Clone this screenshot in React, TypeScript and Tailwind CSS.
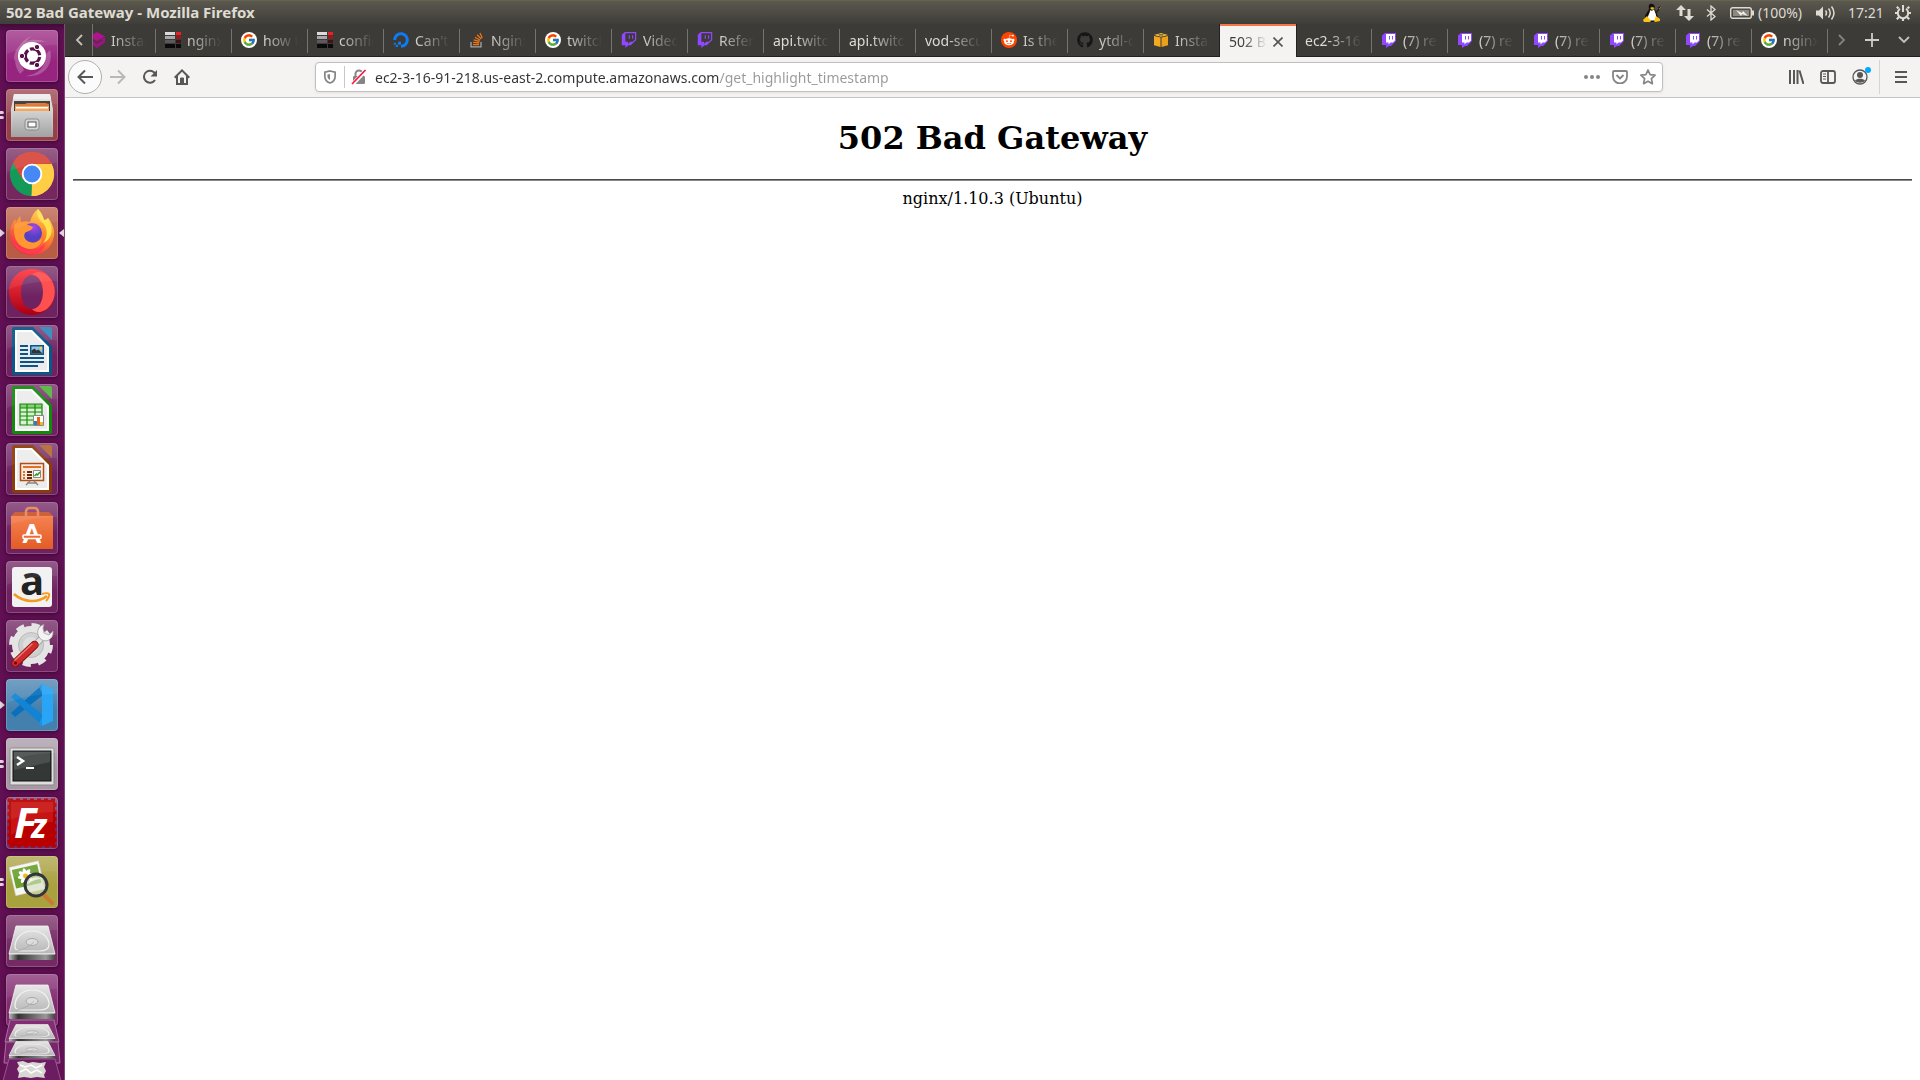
import React from "react";
import { FcGoogle } from "react-icons/fc";
import { FaDigitalOcean, FaGithub, FaRedditAlien, FaTwitch } from "react-icons/fa";

/* ---------- tab icons ---------- */

const ClearLogo = () => (
  <svg viewBox="0 0 16 16" className="size-4">
    <path d="M8 0l8 4.500-8 4.500-8-4.500z" fill="#b0148c" />
    <path d="M0 5l8 4.500L16 5v5.500L8 16l-8-5.500z" fill="#a01283" />
    <path d="M3 8l5 3 5-3" fill="none" stroke="#3c3b37" strokeWidth="1.300" />
  </svg>
);

const Blocks = () => (
  <svg viewBox="0 0 16 16" className="size-4" shapeRendering="crispEdges">
    <path fill="#dcdadd" d="M0 0h10v3H0z" />
    <path fill="#f01f26" d="M11 0h5v3h-5z" />
    <path fill="#a9a7aa" d="M0 4h10v3H0z" />
    <path fill="#98191d" d="M11 4h5v3h-5z" />
    <path fill="#5b595b" d="M0 8h10v3H0z" />
    <path fill="#3d1517" d="M11 8h5v3h-5z" />
    <path fill="#0a0a0a" d="M0 12h10v4H0zM11 12h5v4h-5z" />
  </svg>
);

const Google = () => (
  <span className="flex size-4 items-center justify-center rounded-full bg-white">
    <FcGoogle className="size-3.5" />
  </span>
);

const Ocean = () => <FaDigitalOcean className="size-4 text-[#0d7cf5]" />;

const Stack = () => (
  <svg viewBox="0 0 16 16" className="size-4" fill="none" strokeWidth="1.300">
    <path d="M2 10v4.800h10V10" stroke="#a4a6a8" />
    <path
      d="M4 12.700h6M4.100 10.400l6 .6M4.700 7.900l5.800 1.600M6 5.200l5.200 3M8.100 2.700l4.200 4.300M11 1l2.300 5"
      stroke="#ea7413"
    />
  </svg>
);

const TwitchOutline = () => <FaTwitch className="size-4 text-[#9147ff]" />;

const Twitch = () => (
  <svg viewBox="0 0 16 16" className="size-4">
    <path d="M1 3.500L4 1h11v8l-5 5H8l-3 2v-3H1z" fill="#9147ff" />
    <path d="M5 2h9v6.500L12 10.500H9.500L7.500 12.500v-2H5z" fill="#fff" />
    <path d="M8 4h1v3.500H8zM11 4h1v3.500h-1z" fill="#9147ff" />
  </svg>
);

const Reddit = () => (
  <span className="flex size-4 items-center justify-center rounded-full bg-[#ff4500]">
    <FaRedditAlien className="size-3 text-white" />
  </span>
);

const Github = () => <FaGithub className="size-4 text-[#171515]" />;

const Cube = () => (
  <svg viewBox="0 0 16 16" className="size-4">
    <path d="M1 3l7-2 7 2-7 1.800z" fill="#f8c13c" />
    <path d="M1 4l6.500 1.600V15L1 13.200z" fill="#f2a91f" />
    <path d="M15 4L8.500 5.600V15l6.500-1.800z" fill="#eba018" />
    <path d="M4 1.500l6 2M12 1.500l-6 2" stroke="#3c3b37" strokeWidth=".6" />
  </svg>
);

type Tab = { title: string; icon?: () => React.JSX.Element; active?: boolean };

const tabs: Tab[] = [
  { title: "Install", icon: ClearLogo },
  { title: "nginx", icon: Blocks },
  { title: "how to", icon: Google },
  { title: "config", icon: Blocks },
  { title: "Can't", icon: Ocean },
  { title: "Nginx", icon: Stack },
  { title: "twitch", icon: Google },
  { title: "Video", icon: TwitchOutline },
  { title: "Refer", icon: TwitchOutline },
  { title: "api.twitch" },
  { title: "api.twitch" },
  { title: "vod-secure" },
  { title: "Is there", icon: Reddit },
  { title: "ytdl-org", icon: Github },
  { title: "Install", icon: Cube },
  { title: "502 Bad", active: true },
  { title: "ec2-3-16-91" },
  { title: "(7) reddit", icon: Twitch },
  { title: "(7) reddit", icon: Twitch },
  { title: "(7) reddit", icon: Twitch },
  { title: "(7) reddit", icon: Twitch },
  { title: "(7) reddit", icon: Twitch },
  { title: "nginx", icon: Google },
];

function TabItem({ tab, beforeActive }: { tab: Tab; beforeActive: boolean }) {
  const Icon = tab.icon;
  if (tab.active) {
    return (
      <div className="relative z-10 flex h-[33px] w-[76px] shrink-0 items-center border-t-2 border-[#f2784b] bg-[#f4f3f2] pl-[9px] outline outline-1 outline-[#22211f]">
        <button className="w-[38px] overflow-hidden whitespace-nowrap text-left text-[#3c3c3c] [mask-image:linear-gradient(to_right,black_35%,transparent)]">
          {tab.title}
        </button>
        <button aria-label="Close tab" className="ml-0.5 p-1">
          <svg viewBox="0 0 10 10" className="size-2.5" stroke="#55544f" strokeWidth="1.600">
            <path d="M.5.5l9 9M9.500.5l-9 9" />
          </svg>
        </button>
      </div>
    );
  }
  return (
    <button className="relative flex h-8 w-[76px] shrink-0 items-center gap-1.5 pl-[9px] pr-2.5 text-[#dfdbd2]">
      {Icon && (
        <span className="shrink-0">
          <Icon />
        </span>
      )}
      <span className="min-w-0 flex-1 overflow-hidden whitespace-nowrap text-left [mask-image:linear-gradient(to_left,transparent,black_36px)]">
        {tab.title}
      </span>
      {!beforeActive && <span className="absolute right-0 top-[5px] h-6 w-px bg-[#75746f]" />}
    </button>
  );
}

/* ---------- launcher icons, drawn on a 52 x 52 tile ---------- */

const Ubuntu = () => (
  <>
    <path d="M8 30C8 12 26 6 40 12c-10-1-22 2-26 14zM44 20c4 14-6 28-24 26 12-2 20-8 20-22zM14 44C4 30 10 12 26 6 14 14 12 30 18 40z" fill="#fff" opacity=".22" />
    <circle cx="26" cy="26" r="14" fill="#fff" />
    <circle cx="26.500" cy="26" r="7.200" fill="none" stroke="#5a1149" strokeWidth="3.200" strokeDasharray="13 2.080" strokeDashoffset="-1" />
    <g fill="#5a1149" stroke="#fff" strokeWidth="1">
      <circle cx="16" cy="26" r="2.700" />
      <circle cx="31" cy="17" r="2.700" />
      <circle cx="31" cy="35" r="2.700" />
    </g>
  </>
);

const Files = () => (
  <>
    <path d="M8 5h36l3 15v28H5V20z" fill="url(#silver)" />
    <path d="M8 5h36l1 5H7z" fill="#ededed" />
    <path d="M8 12h36v10H8z" fill="#3a3632" />
    <path d="M9 15h10l2-1h18l4 1v6H9z" fill="#df7433" />
    <path d="M9 17h34v5H9z" fill="#f6a65b" />
    <path d="M10 18h32v1.500H10z" fill="#fff" />
    <path d="M7 22h38l2 26H5z" fill="url(#drawer)" />
    <rect x="19" y="30" width="14" height="11" rx="2.500" fill="#d4d4d4" stroke="#8a8a8a" />
    <rect x="22" y="33" width="8" height="5" fill="#fff" stroke="#555" />
  </>
);

const Chrome = () => (
  <>
    <path d="M26 26L6.800 15A22 22 0 0 1 45.200 15z" fill="#d8483c" />
    <path d="M26 26L45.200 15A22 22 0 0 1 25 48z" fill="#ffce44" />
    <path d="M26 26L25.500 48A22 22 0 0 1 6.900 15z" fill="#149a58" />
    <path d="M6.900 15L17 32l9-16h19.500a22 22 0 0 0-38.600-1z" fill="#d8483c" />
    <path d="M45.500 16H26l9 15-9.500 17A22 22 0 0 0 45.500 16z" fill="#ffce44" />
    <circle cx="26" cy="26" r="10.300" fill="#fff" />
    <circle cx="26" cy="26" r="8.400" fill="#4688f4" />
  </>
);

const Firefox = () => (
  <>
    <path d="M32 2c3 3 5 7 6 11 2 0 3-1 4-2 5 6 8 14 5 22-3 9-11 15-21 15C13 48 4 39 4 27c0-6 2-11 5-15l1 3c1-2 3-4 4-6l1 6c3-1 6-1 9 0 1-5 4-10 8-13z" fill="url(#fire)" />
    <path d="M32 2c-2 7 1 10 5 14 5 6 5 14 0 20 7-3 10-9 8-18-1-3-2-5-3-7-1 1-2 2-4 2-1-4-3-8-6-11z" fill="#ffe14d" />
    <circle cx="26" cy="26" r="10" fill="url(#globe)" />
    <path d="M9 17c5-3 9-2 13 1 2 1 4 1 5 2-1 4-6 4-8 6-2 3 0 8 5 9 5 2 9-1 12-4 0 9-9 13-17 10C10 38 6 27 9 17z" fill="#ff9833" />
    <path d="M5 27c1 7 6 13 13 15 8 3 17 0 21-6-1 8-8 11-14 11C13 47 5 38 5 27z" fill="#ff3b4e" />
  </>
);

const Opera = () => (
  <>
    <path fillRule="evenodd" d="M26 3c13 0 23 10 23 23S39 49 26 49 3 39 3 26 13 3 26 3zm0 6c-7 0-11 8-11 17s4 17 11 17 11-8 11-17S33 9 26 9z" fill="url(#opera)" />
    <path d="M26 9c7 0 11 8 11 17s-4 17-11 17c4 5 12 3 16-1 9-9 9-23 0-32-4-4-12-6-16-1z" fill="#ff5050" />
  </>
);

function OfficeDoc({ color, light, children }: { color: string; light: string; children: React.ReactNode }) {
  return (
    <>
      <path d="M8 2h19l19 19v27a2 2 0 0 1-2 2H8a2 2 0 0 1-2-2V4a2 2 0 0 1 2-2z" fill={color} />
      <path d="M9 5h17l17 17v25H9z" fill="#fff" />
      <path d="M11 7h14l16 16v22H11z" fill="#ececec" />
      <path d="M33 2h11a2 2 0 0 1 2 2v11z" fill={light} />
      {children}
    </>
  );
}

const Writer = () => (
  <OfficeDoc color="#0a5687" light="#3287ba">
    <path d="M14 21h8M14 25h8M14 29h8M14 33h24M14 37h24M14 41h18" stroke="#0a5687" strokeWidth="2" />
    <path d="M24 20h14v10H24z" fill="#0a5687" />
    <path d="M25.500 21.500h11v7h-11z" fill="#8fc5e6" />
    <path d="M25.500 28.500v-3l3-2 2 2 2-1 4 4z" fill="#333" />
    <circle cx="35" cy="23" r="1.200" fill="#ffd21f" />
  </OfficeDoc>
);

const Calc = () => (
  <OfficeDoc color="#148a0c" light="#52b53e">
    <path d="M14 20h22v21H14z" fill="#d9f2cf" />
    <path d="M14 20h22v4H14z" fill="#88cf74" />
    <path d="M14 20h22v21H14zM14 24h22M14 28h22M14 32h22M14 36h22M21 20v21M29 20v21" fill="none" stroke="#148a0c" strokeWidth="1.200" />
    <path d="M27.500 31.500h10v10h-10z" fill="#fff" stroke="#888" />
    <path d="M28 37h3v4h-3z" fill="#2a7fc0" />
    <path d="M31 33h3v8h-3z" fill="#e8641b" />
    <path d="M34 38h3v3h-3z" fill="#f5b915" />
  </OfficeDoc>
);

const Impress = () => (
  <OfficeDoc color="#8c3c0b" light="#b56a33">
    <path d="M14.500 20.500h23v17h-23z" fill="#fbeadf" stroke="#b04c14" strokeWidth="1.500" />
    <path d="M17 24h18" stroke="#dc702c" strokeWidth="2" />
    <path d="M17 29h2M17 32h2M17 35h2" stroke="#dc702c" strokeWidth="2" />
    <path d="M21 29h5M21 32h5M21 35h5" stroke="#6e2b08" strokeWidth="1.800" />
    <path d="M27.500 27.500h7v7h-7z" fill="#fff" stroke="#888" />
    <path d="M28.500 33l2-2 1 1 2.500-3" fill="none" stroke="#2b9c1e" strokeWidth="1.500" />
    <path d="M24 38l-4 4M28 38l4 4M21 40h10" stroke="#888" strokeWidth="1.500" />
  </OfficeDoc>
);

const Software = () => (
  <>
    <path d="M5 14h42v33H5z" fill="url(#bag)" />
    <path d="M5 14l4-4h34l4 4z" fill="#c9552c" />
    <path d="M20 17V9a4 4 0 0 1 4-3h4a4 4 0 0 1 4 3v8" fill="none" stroke="#e9855c" strokeWidth="2.500" />
    <text x="26" y="41" textAnchor="middle" fontFamily="Lato, sans-serif" fontWeight="900" fontSize="26" fill="#fff">A</text>
    <rect x="17" y="33" width="18" height="3.500" rx="1" fill="#ed6b36" stroke="#fff" strokeWidth="1.500" />
  </>
);

const Amazon = () => (
  <>
    <rect x="6" y="6" width="40" height="40" rx="3" fill="#f2f2f2" />
    <text x="26" y="34" textAnchor="middle" fontFamily="Open Sans, sans-serif" fontWeight="700" fontSize="40" fill="#222">a</text>
    <path d="M8 33c10 9 24 9 33 2" fill="none" stroke="#f79a1c" strokeWidth="2.600" />
    <path d="M36 33c3-1 6-1 7 0s-1 5-3 7" fill="none" stroke="#f79a1c" strokeWidth="2" />
  </>
);

const Settings = () => (
  <>
    <circle cx="25" cy="25" r="15.500" fill="none" stroke="#e4e4e4" strokeWidth="7" />
    <circle cx="25" cy="25" r="19.500" fill="none" stroke="#e4e4e4" strokeWidth="5" strokeDasharray="8 7.300" />
    <circle cx="25" cy="25" r="12.500" fill="#cfcfcf" stroke="#b8b8b8" />
    <circle cx="25" cy="25" r="8" fill="#dedede" />
    <path d="M28 26l9-9" stroke="#999" strokeWidth="6.500" />
    <path d="M28 26l9-9" stroke="#e4e4e4" strokeWidth="5" />
    <path d="M38 4.500C32 6 30 12 33 17c3 5 9 5 12 1 2-2 2-4 2-7l-4 4-5-2-1-5z" fill="#f3f3f3" stroke="#999" strokeWidth=".8" />
    <path d="M9.500 43l19-18" stroke="#8c0f0f" strokeWidth="8.500" strokeLinecap="round" />
    <path d="M9.500 43l19-18" stroke="#cf2b2b" strokeWidth="6.500" strokeLinecap="round" />
    <path d="M9 40l17-16" stroke="#ee7a7a" strokeWidth="1.500" strokeLinecap="round" />
    <circle cx="9.500" cy="43" r="1.500" fill="#5b0a0a" />
  </>
);

const Code = () => (
  <>
    <path d="M5 34l4 4L37 16V5z" fill="#0870bc" />
    <path d="M5 18l4-4 28 22v11z" fill="#1384d4" />
    <path d="M36 5l11 5v32l-11 5z" fill="#2aa5f5" />
    <path d="M36 5v42l-3-3 3-6V14l-3-6z" fill="#1c94e6" />
  </>
);

const Terminal = () => (
  <>
    <rect x="4" y="10" width="44" height="37" rx="1.500" fill="#dedede" stroke="#868686" />
    <rect x="7" y="13" width="38" height="30" fill="#333736" stroke="#111" />
    <path d="M8 14h36v10L8 32z" fill="#fff" opacity=".12" />
    <path d="M11 19l6 4-6 4" fill="none" stroke="#fff" strokeWidth="2.500" />
    <path d="M20 30h8" stroke="#fff" strokeWidth="2" />
  </>
);

const FileZilla = () => (
  <>
    <rect x="3" y="3" width="46" height="46" fill="#b80000" stroke="#b80000" strokeWidth="3" strokeDasharray="4 3" />
    <path d="M5 5h42v20C30 25 16 30 5 38z" fill="#d42020" opacity=".6" />
    <text x="8" y="41" fontFamily="Open Sans, sans-serif" fontStyle="italic" fontWeight="700" fontSize="42" fill="#fff">
      F<tspan dx="-5" fontSize="34">z</tspan>
    </text>
  </>
);

const ImageViewer = () => (
  <>
    <g transform="rotate(-13 20 22)">
      <path d="M6 8h30v29H6z" fill="#f6f6f2" stroke="#ccc" strokeWidth=".5" />
      <path d="M8 11h26v19H8z" fill="#6da233" />
      <g fill="#fff">
        <ellipse cx="20" cy="20" rx="8" ry="2.500" />
        <ellipse cx="20" cy="20" rx="2.500" ry="8" />
        <ellipse cx="20" cy="20" rx="8" ry="2.500" transform="rotate(45 20 20)" />
        <ellipse cx="20" cy="20" rx="8" ry="2.500" transform="rotate(-45 20 20)" />
      </g>
      <circle cx="20" cy="20" r="2.500" fill="#f0bc1d" />
    </g>
    <path d="M38 39l8 8" stroke="#c97b35" strokeWidth="4" strokeLinecap="round" />
    <circle cx="30" cy="29" r="11" fill="#d4dec0" fillOpacity=".65" stroke="#34373a" strokeWidth="3" />
    <path d="M22 28c1-6 8-9 14-5-4 0-9 1-14 5z" fill="#fff" opacity=".7" />
  </>
);

const Disk = () => (
  <>
    <path d="M10 11h32l7 28H3z" fill="url(#silver)" stroke="#f5f5f5" strokeWidth=".8" />
    <path d="M3 39h46v5a1 1 0 0 1-1 1H4a1 1 0 0 1-1-1z" fill="url(#steel)" />
    <path d="M3 39h46" stroke="#eee" />
    <path d="M9 32c0-8 6-16 17-16 12 0 17 8 17 14 0 5-5 6-10 6H16c-5 0-7-1-7-4z" fill="none" stroke="#f1f1f1" strokeWidth="1.200" />
    <ellipse cx="26" cy="27" rx="6" ry="3.500" fill="#ddd" stroke="#a8a8a8" />
    <path d="M10 36c8-1 14-5 18-9" fill="none" stroke="#aaa" strokeWidth=".8" />
  </>
);

type Launcher = {
  name: string;
  art: () => React.JSX.Element;
  tile: string;
  left?: "arrow" | "double";
  right?: boolean;
};

const launchers: Launcher[] = [
  { name: "Search your computer", art: Ubuntu, tile: "bg-[#97257f]" },
  { name: "Files", art: Files, tile: "bg-[#97404a]", left: "double" },
  { name: "Google Chrome", art: Chrome, tile: "bg-[#75285f]" },
  { name: "Firefox", art: Firefox, tile: "bg-[#b95c45]", left: "arrow", right: true },
  { name: "Opera", art: Opera, tile: "bg-[#6e2260]" },
  { name: "LibreOffice Writer", art: Writer, tile: "bg-[#6e2260]" },
  { name: "LibreOffice Calc", art: Calc, tile: "bg-[#6e2260]" },
  { name: "LibreOffice Impress", art: Impress, tile: "bg-[#6e2260]" },
  { name: "Ubuntu Software", art: Software, tile: "bg-[#6e2260]" },
  { name: "Amazon", art: Amazon, tile: "bg-[#6e2260]" },
  { name: "System Settings", art: Settings, tile: "bg-[#6e2260]" },
  { name: "Visual Studio Code", art: Code, tile: "bg-[#4380ae]", left: "arrow" },
  { name: "Terminal", art: Terminal, tile: "bg-[#a898a6]", left: "double" },
  { name: "FileZilla", art: FileZilla, tile: "bg-[#752a6b]" },
  { name: "Image Viewer", art: ImageViewer, tile: "bg-[#a9a03e]", left: "double" },
  { name: "Disk 1", art: Disk, tile: "bg-[#752a65]" },
  { name: "Disk 2", art: Disk, tile: "bg-[#812a6f]" },
];

function LauncherBar() {
  return (
    <nav
      aria-label="Launcher"
      className="flex w-[65px] shrink-0 flex-col gap-[7px] overflow-hidden border-r border-[#84477a] bg-[#601053] bg-linear-to-b from-[#420a39] to-[#601053] to-[8px] pt-1.5"
    >
      {launchers.map((l) => (
        <div key={l.name} className="flex w-16 shrink-0 items-center">
          <span className="flex w-1.5 shrink-0 flex-col items-start gap-0.5">
            {l.left === "double" && (
              <>
                <span className="h-[3px] w-1 rounded-r bg-[#e0d5dd]" />
                <span className="h-[3px] w-1 rounded-r bg-[#e0d5dd]" />
              </>
            )}
            {l.left === "arrow" && (
              <svg viewBox="0 0 5 8" className="h-2 w-[5px]">
                <path d="M0 0l5 4-5 4z" fill="#e0d5dd" />
              </svg>
            )}
          </span>
          <button
            aria-label={l.name}
            className={`size-[52px] shrink-0 overflow-hidden rounded-[4px] shadow-[0_1px_4px_#3a0532] ${l.tile}`}
          >
            <span className="flex size-[52px] rounded-[4px] bg-linear-to-b from-white/20 to-transparent to-60% shadow-[inset_0_0_0_1px_rgba(255,255,255,0.2)]">
              <svg viewBox="0 0 52 52" className="size-[52px]">
                <l.art />
                <path d="M1 1h50v14C34 15 18 17 1 24z" fill="#fff" opacity=".07" />
              </svg>
            </span>
          </button>
          <span className="flex w-1.5 shrink-0 justify-end">
            {l.right && (
              <svg viewBox="0 0 5 8" className="h-2 w-[5px]">
                <path d="M5 0L0 4l5 4z" fill="#e0d5dd" />
              </svg>
            )}
          </span>
        </div>
      ))}
      <svg viewBox="0 0 64 62" className="-mt-3.5 h-[62px] w-16 shrink-0">
        <path d="M10 1h44l5 22H5z" fill="#812f72" stroke="#a9709f" />
        <g transform="translate(6 0) scale(1 .5)">
          <Disk />
        </g>
        <path d="M6 23h52l2 21H4z" fill="#76266a" stroke="#a9709f" />
        <g transform="translate(6 17) scale(1 .5)">
          <Disk />
        </g>
        <path d="M9 40h46l6 22H3z" fill="#6c1c60" stroke="#93588b" />
        <path d="M17 43l6-1 5 2 5-1 7 1 6-1-2 5 2 4-2 4 1 3-8-1-6 1-7-1-6 1 1-5-2-4 2-3z" fill="#d9d7d3" />
        <path d="M20 46l5 2 6-2 5 3 6-3M20 53l6-3 5 4 6-3 5 3" fill="none" stroke="#fff" strokeWidth="1.500" />
      </svg>
    </nav>
  );
}

/* ---------- system bar ---------- */

function SystemBar() {
  return (
    <header className="flex h-6 shrink-0 items-center border-t border-[#66634f] bg-linear-to-b from-[#5b584f] to-[#3f3e39] pl-1.5 pr-2 text-[14px] leading-none text-[#dfdbd2]">
      <h1 className="text-[15px] leading-none font-bold">502 Bad Gateway - Mozilla Firefox</h1>
      <div className="ml-auto flex items-center">
        <svg viewBox="0 0 20 20" className="mr-3.5 size-5">
          <path d="M8 1c3-1 5 1 5 4 0 4 3 6 3 10 0 3-3 4-7 4s-6-2-6-5c0-3 3-5 4-8 0-2-1-4 1-5z" fill="#111" />
          <path d="M8 7c1 1 3 1 4-1 1 4 3 6 2 10-1 2-7 2-8 0-1-3 2-5 2-9z" fill="#fff" />
          <path d="M8 5l2-1 3 1-3 2z" fill="#f6b511" />
          <path d="M1 17l4-4 4 5-1 1H2zM12 18l2-5 4 3v2l-5 1z" fill="#fcc516" />
          <path d="M14 10l3-4M16 5l3-1" stroke="#222" strokeWidth="1.500" />
          <path d="M17 6l2-2" stroke="#b96a2b" />
        </svg>
        <svg viewBox="0 0 18 16" className="mr-3 h-4 w-[18px]" fill="#dfdbd2">
          <path d="M5 0l5 5H6.500v6h-3V5H0zM13 16l-5-5h3.500V4h3v7H18z" />
        </svg>
        <svg viewBox="0 0 10 16" className="mr-3.5 h-4 w-2.5" fill="none" stroke="#dfdbd2" strokeWidth="1.300">
          <path d="M1 4.500l8 7-4 3.500V1l4 3.500-8 7" />
        </svg>
        <svg viewBox="0 0 24 12" className="mr-1 h-3 w-6">
          <rect x=".7" y=".7" width="20.600" height="10.600" rx="2" fill="none" stroke="#dfdbd2" strokeWidth="1.400" />
          <path d="M3 3h16v6H3z" fill="#8b8981" />
          <path d="M22 3.500h2v5h-2z" fill="#dfdbd2" />
          <path d="M6 3l6 3 1-2 5 5-6-2-1 2z" fill="#f4f1e8" />
        </svg>
        <span className="w-12">(100%)</span>
        <svg viewBox="0 0 20 16" className="ml-2.5 h-4 w-5" fill="none" stroke="#dfdbd2" strokeWidth="1.500">
          <path d="M0 5.500h3l4-4v13l-4-4H0z" fill="#dfdbd2" stroke="none" />
          <path d="M9.500 5.500q2 2.500 0 5M12.500 3.500q3.500 4.500 0 9M15.500 1.500q5 6.500 0 13" />
        </svg>
        <span className="ml-3 w-10">17:21</span>
        <svg viewBox="0 0 18 18" className="ml-1.5 size-[18px]" fill="none" stroke="#dfdbd2">
          <path d="M6 4.800a5.200 5.200 0 1 0 6 0" strokeWidth="2" />
          <path d="M9 1v7" strokeWidth="2" />
          <path d="M4.500 4.500L2.800 2.800M13.500 4.500l1.700-1.700M3.500 9H1M14.500 9H17M5 13l-2.200 2.200M13 13l2.200 2.200M9 14.500V17" strokeWidth="2.200" />
        </svg>
      </div>
    </header>
  );
}

/* ---------- browser ---------- */

function TabStrip() {
  return (
    <div className="flex h-[33px] shrink-0 border-b border-[#22211f] bg-[#3c3b37] text-[14px]">
      <button aria-label="Scroll tabs left" className="flex w-[28px] shrink-0 items-center justify-center border-r border-[#75746f]">
        <svg viewBox="0 0 8 12" className="h-3 w-2" fill="none" stroke="#c4c1ba" strokeWidth="1.800">
          <path d="M7 1L2 6l5 5" />
        </svg>
      </button>
      <div className="-mb-px flex min-w-0 flex-1 justify-end overflow-hidden">
        {tabs.map((t, i) => (
          <TabItem key={i} tab={t} beforeActive={!!tabs[i + 1]?.active} />
        ))}
      </div>
      <div className="flex w-[92px] shrink-0 items-center">
        <button aria-label="Scroll tabs right" className="flex w-7 justify-center">
          <svg viewBox="0 0 8 12" className="h-3 w-2" fill="none" stroke="#84827d" strokeWidth="1.800">
            <path d="M1 1l5 5-5 5" />
          </svg>
        </button>
        <button aria-label="New tab" className="flex w-8 justify-center">
          <svg viewBox="0 0 14 14" className="size-3.5" stroke="#d0cdc6" strokeWidth="1.800">
            <path d="M7 0v14M0 7h14" />
          </svg>
        </button>
        <button aria-label="List all tabs" className="flex w-8 justify-center">
          <svg viewBox="0 0 12 8" className="h-2 w-3" fill="none" stroke="#c4c1ba" strokeWidth="1.800">
            <path d="M1 1l5 5 5-5" />
          </svg>
        </button>
      </div>
    </div>
  );
}

const toolButton = "flex size-8 shrink-0 items-center justify-center";

function NavBar() {
  return (
    <div className="flex h-[41px] shrink-0 items-center border-b border-[#c5c4c3] bg-[#f4f3f2] pl-[3px] pr-[3px] text-[#575757]">
      <button aria-label="Back" className="flex size-[34px] shrink-0 items-center justify-center rounded-full border border-[#b1b0af] bg-[#fbfbfb]">
        <svg viewBox="0 0 16 16" className="size-4" fill="none" stroke="currentColor" strokeWidth="2">
          <path d="M16 8H1.500M8 1.500L1.500 8 8 14.500" />
        </svg>
      </button>
      <button aria-label="Forward" className={toolButton}>
        <svg viewBox="0 0 16 16" className="size-4" fill="none" stroke="#b9b8b7" strokeWidth="2">
          <path d="M0 8h14.500M8 1.500L14.500 8 8 14.500" />
        </svg>
      </button>
      <button aria-label="Reload" className={toolButton}>
        <svg viewBox="0 0 16 16" className="size-4" fill="none" stroke="currentColor" strokeWidth="2">
          <path d="M13 11a6 6 0 1 1 .5-5.500" />
          <path d="M15 1v6.500H8.500z" fill="currentColor" stroke="none" />
        </svg>
      </button>
      <button aria-label="Home" className={toolButton}>
        <svg viewBox="0 0 16 16" className="size-4" fill="none" stroke="currentColor" strokeWidth="2">
          <path d="M.7 8.700L8 1.400l7.300 7.300M3 7v8h10V7" />
          <path d="M6.500 15V9h3v6z" fill="currentColor" strokeWidth="1" />
        </svg>
      </button>

      <div className="mx-[117px] flex h-[30px] min-w-0 flex-1 items-center rounded-[4px] border border-[#c0bfbe] bg-white shadow-[0_1px_3px_rgba(0,0,0,0.08)]">
        <button aria-label="Tracking protection" className="flex w-[28px] justify-center">
          <svg viewBox="0 0 14 16" className="h-3.5 w-3" fill="none" stroke="#858585" strokeWidth="2">
            <path d="M7 1l6 1.500V7c0 4-2 6.500-6 8-4-1.500-6-4-6-8V2.500z" />
            <path d="M7 4.500v7c-2-1-3-2.500-3-5V5z" fill="#858585" stroke="none" />
          </svg>
        </button>
        <span className="h-[22px] w-px bg-[#c9c9c9]" />
        <button aria-label="Connection is not secure" className="flex w-7 justify-center">
          <svg viewBox="0 0 16 16" className="size-4">
            <path d="M4.500 8V5a3.500 3.500 0 0 1 7 0v3" fill="none" stroke="#858585" strokeWidth="2" />
            <rect x="2" y="7" width="12" height="8" rx="1.200" fill="#858585" />
            <path d="M1.500 15.500L15 1" stroke="#fff" strokeWidth="4" />
            <path d="M1 15L14.500 1" stroke="#ff1744" strokeWidth="1.800" />
          </svg>
        </button>
        <input
          aria-label="Address"
          defaultValue="ec2-3-16-91-218.us-east-2.compute.amazonaws.com/get_highlight_timestamp"
          className="ml-0.5 h-7 min-w-0 flex-1 bg-linear-to-r from-[#333] from-[345px] to-[#999] to-[345px] bg-clip-text text-[14px] text-transparent outline-none"
        />
        <div className="flex items-center text-[#858585]">
          <button aria-label="Page actions" className="flex w-7 justify-center">
            <svg viewBox="0 0 16 4" className="h-1 w-4" fill="currentColor">
              <circle cx="2" cy="2" r="2" />
              <circle cx="8" cy="2" r="2" />
              <circle cx="14" cy="2" r="2" />
            </svg>
          </button>
          <button aria-label="Save to Pocket" className="flex w-7 justify-center">
            <svg viewBox="0 0 16 14" className="h-3.5 w-4" fill="none" stroke="currentColor" strokeWidth="1.800">
              <path d="M2 1h12a1 1 0 0 1 1 1v4.500a7 7 0 0 1-14 0V2a1 1 0 0 1 1-1z" />
              <path d="M4.500 5L8 8.500 11.500 5" />
            </svg>
          </button>
          <button aria-label="Bookmark this page" className="flex w-7 justify-center">
            <svg viewBox="0 0 16 16" className="size-4" fill="none" stroke="currentColor" strokeWidth="1.700" strokeLinejoin="round">
              <path d="M8 1l2.100 4.700 5 .5-3.700 3.400 1 5.100L8 12.200l-4.400 2.500 1-5.100L.9 6.200l5-.5z" />
            </svg>
          </button>
        </div>
      </div>

      <button aria-label="Library" className={toolButton}>
        <svg viewBox="0 0 16 14" className="h-3.5 w-4" stroke="currentColor" strokeWidth="2">
          <path d="M2 0v14M6 0v14M9.500 0v14M11.500.5L15.500 14" />
        </svg>
      </button>
      <button aria-label="Sidebars" className={toolButton}>
        <svg viewBox="0 0 16 14" className="h-3.5 w-4" fill="none" stroke="currentColor" strokeWidth="1.800">
          <rect x="1" y="1" width="14" height="12" rx="2" />
          <path d="M8 1v12" />
          <path d="M3 4h3M3 6.500h3M3 9h3" strokeWidth="1" />
        </svg>
      </button>
      <button aria-label="Account" className={toolButton + " relative"}>
        <svg viewBox="0 0 16 16" className="size-4">
          <circle cx="8" cy="8" r="7" fill="none" stroke="currentColor" strokeWidth="1.300" />
          <circle cx="8" cy="6" r="3" fill="currentColor" />
          <path d="M3 11.500c2-2.500 8-2.500 10 0-2 3-8 3-10 0z" fill="currentColor" />
        </svg>
        <span className="absolute right-[5px] top-1.5 size-1.5 rounded-full bg-[#00aaff]" />
      </button>
      <span className="ml-[3px] h-[34px] w-px shrink-0 bg-[#d5d4d3]" />
      <button aria-label="Menu" className="ml-[5px] flex size-8 shrink-0 items-center justify-center">
        <svg viewBox="0 0 12 12" className="size-3" stroke="currentColor" strokeWidth="2">
          <path d="M0 1h12M0 6h12M0 11h12" />
        </svg>
      </button>
    </div>
  );
}

const Gradients = () => (
  <svg aria-hidden="true" className="absolute size-0">
    <defs>
      <linearGradient id="silver" x1="0" y1="0" x2="0" y2="1">
        <stop offset="0" stopColor="#e6e6e6" />
        <stop offset="1" stopColor="#b6b6b6" />
      </linearGradient>
      <linearGradient id="drawer" x1="0" y1="0" x2="0" y2="1">
        <stop offset="0" stopColor="#d2d2d2" />
        <stop offset="1" stopColor="#a2a2a2" />
      </linearGradient>
      <linearGradient id="steel">
        <stop offset="0" stopColor="#bbb" />
        <stop offset=".2" stopColor="#333" />
        <stop offset=".8" stopColor="#999" />
        <stop offset="1" stopColor="#444" />
      </linearGradient>
      <linearGradient id="fire" x1=".8" y1="0" x2=".3" y2="1">
        <stop offset="0" stopColor="#ffe14d" />
        <stop offset=".45" stopColor="#ff8a2b" />
        <stop offset="1" stopColor="#f5204f" />
      </linearGradient>
      <radialGradient id="globe" cx=".6" cy=".2">
        <stop offset="0" stopColor="#a647e6" />
        <stop offset="1" stopColor="#5540c4" />
      </radialGradient>
      <linearGradient id="opera" x1="0" y1="0" x2="0" y2="1">
        <stop offset="0" stopColor="#ff3a43" />
        <stop offset="1" stopColor="#a80014" />
      </linearGradient>
      <linearGradient id="bag" x1="0" y1="0" x2="0" y2="1">
        <stop offset="0" stopColor="#f58150" />
        <stop offset="1" stopColor="#e35c25" />
      </linearGradient>
    </defs>
  </svg>
);

export default function App() {
  return (
    <div className="flex h-screen flex-col overflow-hidden bg-white font-['Noto_Sans',sans-serif]">
      <Gradients />
      <SystemBar />
      <div className="flex min-h-0 flex-1">
        <LauncherBar />
        <div className="flex min-w-0 flex-1 flex-col">
          <TabStrip />
          <NavBar />
          <main className="flex-1 px-2 pt-[21px] text-center font-['DejaVu_Serif',serif] text-black">
            <h2 className="text-[32px] leading-[38px] font-bold">502 Bad Gateway</h2>
            <hr className="mt-[22px] h-0.5 border-0 border-t border-[#4a4a4a] bg-[#888888]" />
            <p className="mt-2 text-base leading-5">nginx/1.10.3 (Ubuntu)</p>
          </main>
        </div>
      </div>
    </div>
  );
}
